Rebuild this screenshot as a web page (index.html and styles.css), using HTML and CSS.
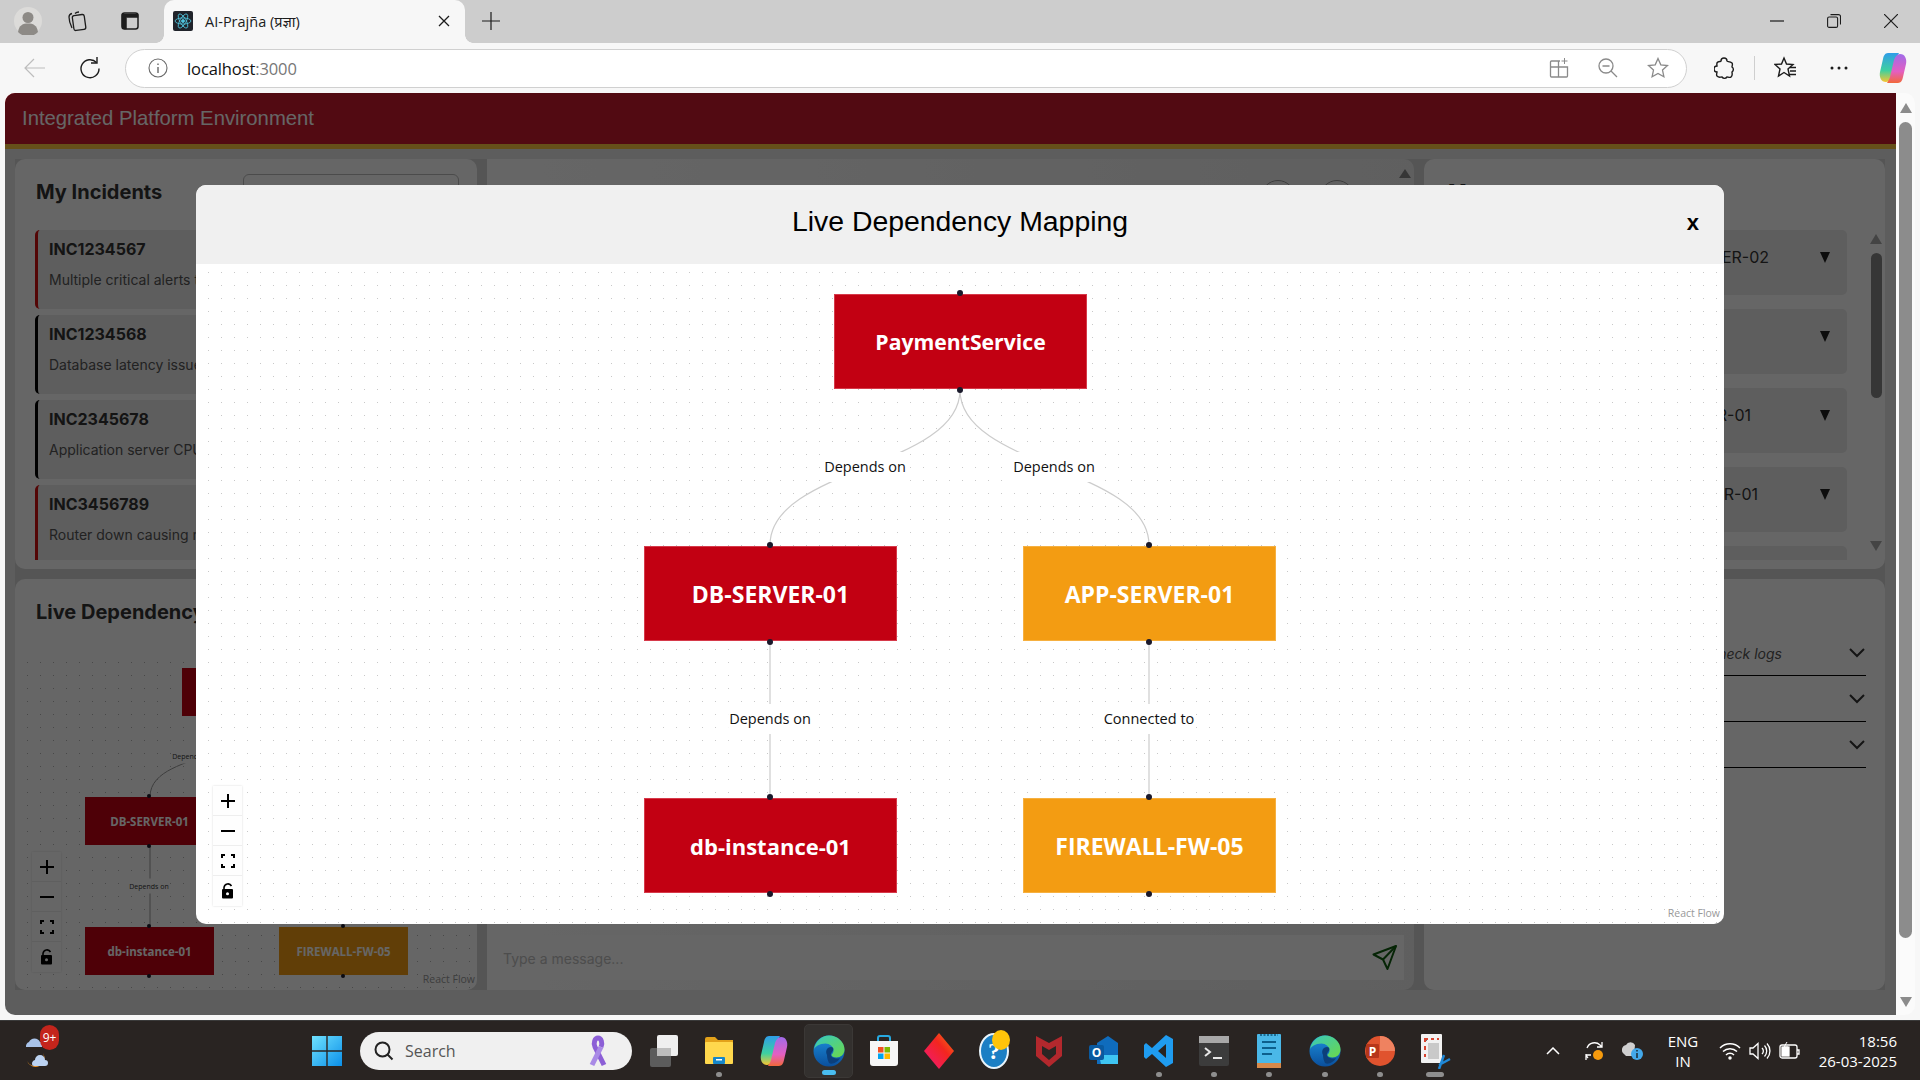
FILE: index.html
```html
<!DOCTYPE html>
<html lang="en">
<head>
<meta charset="utf-8">
<title>AI-Prajña</title>
<link rel="stylesheet" href="styles.css">
</head>
<body>
<div class="tabstrip">
  <span class="ts-profile"><svg viewBox="0 0 28 28" width="28" height="28"><circle cx="14" cy="14" r="14" fill="#dcdbd9"/><circle cx="14" cy="10.5" r="5.5" fill="#8d8a86"/><path d="M4 25c1-7 5-8.5 10-8.5s9 1.500 10 8.500a14 14 0 0 1-20 0z" fill="#8d8a86"/></svg></span>
  <span class="ts-coll"><svg viewBox="0 0 24 24" width="24" height="24" fill="none" stroke="#1c1c1c" stroke-width="1.300"><rect x="8" y="6" width="12" height="15" rx="2" transform="rotate(-8 14 13)"/><path d="M7 19C5 15 4 11 4 8c0-2 1-3 3-3.500M10 4.500C11 3.500 12 3 14 3"/></svg></span>
  <span class="ts-tabs"><svg viewBox="0 0 20 20" width="20" height="20" fill="none" stroke="#1c1c1c" stroke-width="1.500"><rect x="2" y="2" width="16" height="16" rx="2.500"/><path d="M2 3h16v3.500H6.500V18H5a3 3 0 0 1-3-3z" fill="#1c1c1c" stroke-width=".5"/></svg></span>
  <div class="tab">
    <span class="favicon"><svg viewBox="-12 -12 24 24" width="20" height="20" fill="none" stroke="#4fc3dc" stroke-width="1"><ellipse rx="9.500" ry="3.700"/><ellipse rx="9.500" ry="3.700" transform="rotate(60)"/><ellipse rx="9.500" ry="3.700" transform="rotate(120)"/><circle r="1.800" fill="#4fc3dc"/></svg></span>
    <span class="tab-title">AI-Prajña (प्रज्ञा)</span>
    <svg class="tab-x" viewBox="0 0 12 12" width="12" height="12" stroke="#1c1c1c" stroke-width="1.300"><path d="M1 1l10 10M11 1L1 11"/></svg>
  </div>
  <span class="ts-new"><svg viewBox="0 0 18 18" width="18" height="18" stroke="#1c1c1c" stroke-width="1.200"><path d="M9 0v18M0 9h18"/></svg></span>
  <div class="winctl">
    <span class="winbtn"><svg viewBox="0 0 14 14" width="14" height="14" stroke="#1c1c1c" stroke-width="1.200"><path d="M0 7h14"/></svg></span>
    <span class="winbtn"><svg viewBox="0 0 14 14" width="14" height="14" fill="none" stroke="#1c1c1c" stroke-width="1.100"><rect x=".6" y="3" width="10" height="10.400" rx="1.500"/><path d="M3.500 .6h8a2 2 0 0 1 2 2v8"/></svg></span>
    <span class="winbtn"><svg viewBox="0 0 14 14" width="14" height="14" stroke="#1c1c1c" stroke-width="1.200"><path d="M0 0l14 14M14 0L0 14"/></svg></span>
  </div>
</div>

<div class="toolbar">
  <span class="tb-back"><svg viewBox="0 0 22 20" width="22" height="20" fill="none" stroke="#bdbdbd" stroke-width="1.200"><path d="M21 10H1M10 1l-9 9 9 9"/></svg></span>
  <span class="tb-reload"><svg viewBox="0 0 22 24" width="22" height="24" fill="none" stroke="#1c1c1c" stroke-width="1.400"><path d="M17.500 6.500A9 9 0 1 0 20 12.500"/><path d="M18 1v6h-6"/></svg></span>
  <div class="address">
    <span class="addr-info"><svg viewBox="0 0 20 20" width="20" height="20" fill="none" stroke="#6a6a6a" stroke-width="1.100"><circle cx="10" cy="10" r="9"/><path d="M10 9v6M10 5.500v1.500" stroke-width="1.400"/></svg></span>
    <span class="addr-text">localhost<span class="addr-port">:3000</span></span>
    <span class="addr-icons">
      <svg viewBox="0 0 20 20" width="20" height="20" fill="none" stroke="#8a8a8a" stroke-width="1.300"><path d="M11 3H2.500a1 1 0 0 0-1 1v14a1 1 0 0 0 1 1h15a1 1 0 0 0 1-1V9H1.500M9.500 3v16"/><path d="M15.500 0v6M12.500 3h6" stroke-width="1"/></svg>
      <svg viewBox="0 0 20 20" width="20" height="20" fill="none" stroke="#8a8a8a" stroke-width="1.300"><circle cx="8" cy="8" r="7"/><path d="M4.500 8h7M13 13l6 6"/></svg>
      <svg viewBox="0 0 22 22" width="22" height="22" fill="none" stroke="#8a8a8a" stroke-width="1.300"><path d="M11 1.500l2.800 6.300 6.700.7-5 4.600 1.400 6.700L11 16.400l-5.900 3.400 1.400-6.700-5-4.600 6.700-.7z"/></svg>
    </span>
  </div>
  <span class="tb-ext"><svg viewBox="0 0 20 24" width="20" height="24" fill="none" stroke="#1c1c1c" stroke-width="1.400"><path d="M7 5a3 3 0 0 1 6 0c0 1 3 0 5 2 1 1 0 3 0 4a3 3 0 0 1 0 5c0 2 1 3-1 5-1 1-3 0-4 0a3 3 0 0 1-5 0c-2 0-3 1-5-1-1-1 0-3 0-4a3 3 0 0 1 0-6c0-2-1-3 1-4 1-1 3 0 3-1z"/></svg></span>
  <span class="tb-sep"></span>
  <span class="tb-fav"><svg viewBox="0 0 24 24" width="24" height="24" fill="none" stroke="#1c1c1c" stroke-width="1.400"><path d="M10 2l2.500 6 6.500.5-5 4.500 1.500 7-5.500-3.500-5.500 3.500 1.500-7-5-4.500 6.500-.5z"/><path d="M16 11.500h6M16 15h6M15 18.500h7"/></svg></span>
  <span class="tb-dots"><svg viewBox="0 0 18 4" width="18" height="4" fill="#1c1c1c"><circle cx="2" cy="2" r="1.500"/><circle cx="9" cy="2" r="1.500"/><circle cx="16" cy="2" r="1.500"/></svg></span>
  <span class="tb-copilot"><svg viewBox="0 0 28 32" width="28" height="32"><use href="#copilot-art"/></svg></span>
</div>

<div class="viewport">
  <div class="app">
    <header class="app-header">Integrated Platform Environment</header>
    <main class="board">
      <section class="panel incidents">
        <div class="panel-head head-search">
          <h2 class="panel-title">My Incidents</h2>
          <div class="search-box"></div>
        </div>
        <div class="card-list">
          <article class="inc-card inc-red"><h3 class="inc-id">INC1234567</h3><p class="inc-text">Multiple critical alerts triggered on the service</p></article>
          <article class="inc-card inc-black"><h3 class="inc-id">INC1234568</h3><p class="inc-text">Database latency issue on primary</p></article>
          <article class="inc-card inc-black"><h3 class="inc-id">INC2345678</h3><p class="inc-text">Application server CPU usage high</p></article>
          <article class="inc-card inc-red"><h3 class="inc-id">INC3456789</h3><p class="inc-text">Router down causing network outage</p></article>
        </div>
      </section>

      <section class="panel chat">
        <div class="chat-top">
          <div class="chat-circles"><span class="circle"></span><span class="circle"></span></div>
          <span class="mini-arrow"></span>
        </div>
        <div class="chat-input">
          <span class="chat-placeholder">Type a message...</span>
          <svg class="send" viewBox="0 0 25 25" width="25" height="25" fill="none" stroke="#0f5c0f" stroke-width="2" stroke-linejoin="round"><path d="M24 1L1.500 9.500 11 14.500 15.500 24z"/><path d="M24 1L11 14.500"/></svg>
        </div>
      </section>

      <section class="panel devices">
        <div class="panel-head head-devices"><h2 class="panel-title">Messages</h2></div>
        <div class="dev-body">
          <div class="dev-list">
            <div class="dev-card"><span class="dev-name dn-a">DB-SERVER-02</span><span class="tri"></span></div>
            <div class="dev-card"><span class="dev-name dn-b">CORE</span><span class="tri"></span></div>
            <div class="dev-card"><span class="dev-name dn-c">APP-SERVER-01</span><span class="tri"></span></div>
            <div class="dev-card"><span class="dev-name dn-d">ROUTER-01</span><span class="tri"></span></div>
            <div class="dev-card"></div>
          </div>
          <div class="dev-scroll">
            <span class="sb-up"></span>
            <span class="sb-thumb"></span>
            <span class="sb-down"></span>
          </div>
        </div>
      </section>

      <section class="panel graph-panel">
        <div class="panel-head"><h2 class="panel-title">Live Dependency Mapping</h2></div>
        <div class="mini-flow">
          <svg class="flow-edges" width="448" height="411" fill="none" stroke="#999" stroke-width="1"><path d="M135 218C135 190 175 185 190 175"/><path d="M135 267V348"/></svg>
          <div class="mnode mn-top"></div>
          <span class="mlabel ml-a">Depends on</span>
          <span class="mlabel ml-b">Depends on</span>
          <div class="mnode mn-db">DB-SERVER-01<i class="mh mh-t"></i><i class="mh mh-b"></i></div>
          <div class="mnode mn-inst">db-instance-01<i class="mh mh-t"></i><i class="mh mh-b"></i></div>
          <div class="mnode mn-fw">FIREWALL-FW-05<i class="mh mh-t"></i><i class="mh mh-b"></i></div>
          <div class="controls mini-controls">
            <button class="ctl" type="button"><svg viewBox="0 0 14 14" width="14" height="14" stroke="#000" stroke-width="2"><path d="M7 0v14M0 7h14"/></svg></button>
            <button class="ctl" type="button"><svg viewBox="0 0 14 14" width="14" height="14" stroke="#000" stroke-width="2"><path d="M0 7h14"/></svg></button>
            <button class="ctl" type="button"><svg viewBox="0 0 14 14" width="14" height="14" fill="none" stroke="#000" stroke-width="2"><path d="M1 4V1h3M10 1h3v3M13 10v3h-3M4 13H1v-3"/></svg></button>
            <button class="ctl" type="button"><svg viewBox="0 0 12 16" width="12" height="16" fill="#000"><path d="M2 6V4.500A4 4 0 0 1 9.500 3" fill="none" stroke="#000" stroke-width="1.600"/><rect y="6" width="11" height="9.500" rx="1"/><circle cx="5.500" cy="10.700" r="1.500" fill="#fff"/></svg></button>
          </div>
          <span class="rf-credit mini-credit">React Flow</span>
        </div>
      </section>

      <section class="panel actions">
        <div class="act-row"><span class="act-text">Restart the service and check logs</span><svg class="chev" viewBox="0 0 16 10" width="16" height="10" fill="none" stroke="#333" stroke-width="2"><path d="M1 1l7 7 7-7"/></svg></div>
        <div class="act-row"><svg class="chev" viewBox="0 0 16 10" width="16" height="10" fill="none" stroke="#333" stroke-width="2"><path d="M1 1l7 7 7-7"/></svg></div>
        <div class="act-row"><svg class="chev" viewBox="0 0 16 10" width="16" height="10" fill="none" stroke="#333" stroke-width="2"><path d="M1 1l7 7 7-7"/></svg></div>
      </section>
    </main>

    <div class="overlay">
      <div class="modal">
        <div class="modal-head">
          <h1 class="modal-title">Live Dependency Mapping</h1>
          <span class="modal-close">x</span>
        </div>
        <div class="flow">
          <svg class="flow-edges" width="1528" height="660" fill="none" stroke="#ccc" stroke-width="1.200">
            <path d="M764 126C764 203.500 574 203.500 574 281"/>
            <path d="M764 126C764 203.500 953 203.500 953 281"/>
            <path d="M574 376V533"/>
            <path d="M953 376V533"/>
          </svg>
          <div class="node n-red n-pay">PaymentService<i class="h h-t"></i><i class="h h-b"></i></div>
          <div class="node n-red n-db">DB-SERVER-01<i class="h h-t"></i><i class="h h-b"></i></div>
          <div class="node n-amber n-app">APP-SERVER-01<i class="h h-t"></i><i class="h h-b"></i></div>
          <div class="node n-red n-inst">db-instance-01<i class="h h-t"></i><i class="h h-b"></i></div>
          <div class="node n-amber n-fw">FIREWALL-FW-05<i class="h h-t"></i><i class="h h-b"></i></div>
          <span class="elabel el-a">Depends on</span>
          <span class="elabel el-b">Depends on</span>
          <span class="elabel el-c">Depends on</span>
          <span class="elabel el-d">Connected to</span>
          <div class="controls modal-controls">
            <button class="ctl" type="button"><svg viewBox="0 0 14 14" width="14" height="14" stroke="#000" stroke-width="2"><path d="M7 0v14M0 7h14"/></svg></button>
            <button class="ctl" type="button"><svg viewBox="0 0 14 14" width="14" height="14" stroke="#000" stroke-width="2"><path d="M0 7h14"/></svg></button>
            <button class="ctl" type="button"><svg viewBox="0 0 14 14" width="14" height="14" fill="none" stroke="#000" stroke-width="2"><path d="M1 4V1h3M10 1h3v3M13 10v3h-3M4 13H1v-3"/></svg></button>
            <button class="ctl" type="button"><svg viewBox="0 0 12 16" width="12" height="16" fill="#000"><path d="M2 6V4.500A4 4 0 0 1 9.500 3" fill="none" stroke="#000" stroke-width="1.600"/><rect y="6" width="11" height="9.500" rx="1"/><circle cx="5.500" cy="10.700" r="1.500" fill="#fff"/></svg></button>
          </div>
          <span class="rf-credit modal-credit">React Flow</span>
        </div>
      </div>
    </div>
  </div>
  <div class="page-scroll">
    <span class="ps-up"></span>
    <span class="ps-thumb"></span>
    <span class="ps-down"></span>
  </div>
</div>

<div class="taskbar">
  <span class="tk-weather">
    <svg viewBox="0 0 36 40" width="36" height="40"><path d="M4 16a5 5 0 0 1 3-5 6 6 0 0 1 11 0h2v5z" fill="#a9c4ea"/><path d="M21 22a9 9 0 1 1-16 8 8 8 0 0 0 16-8z" fill="#ef9322"/><path d="M10 33a4 4 0 0 1 3-4 5 5 0 0 1 10 0 3 3 0 0 1 0 6H12a2 2 0 0 1-2-2z" fill="#bcd3f2"/></svg>
    <span class="tk-badge">9+</span>
  </span>
  <span class="tk-start"><svg viewBox="0 0 30 30" width="30" height="30"><defs><linearGradient id="win" x1="0" y1="0" x2="1" y2="1"><stop offset="0" stop-color="#6fe2ff"/><stop offset="1" stop-color="#0b8fe8"/></linearGradient></defs><path d="M0 0h14.300v14.300H0zM15.700 0H30v14.300H15.700zM0 15.700h14.300V30H0zM15.700 15.700H30V30H15.700z" fill="url(#win)"/></svg></span>
  <div class="tk-search">
    <svg viewBox="0 0 20 20" width="20" height="20" fill="none" stroke="#222" stroke-width="2"><circle cx="8.500" cy="8.500" r="7"/><path d="M13.500 13.500l5 5"/></svg>
    <span class="tk-search-text">Search</span>
    <svg class="ribbon" viewBox="0 0 20 32" width="20" height="32" fill="none" stroke-width="5"><path d="M16 30L7 12c-2-4 0-9 3-9s5 5 3 9" stroke="#8c5fd6"/><path d="M4 30l9-18" stroke="#a98ae6"/></svg>
  </div>
  <div class="tk-apps">
    <span class="app-slot"><svg viewBox="0 0 30 34" width="30" height="34"><rect x="8" y="1" width="21" height="21" rx="2" fill="#efefef"/><rect x="1" y="14" width="21" height="19" rx="2" fill="#5c5c5c"/><rect x="8" y="14" width="14" height="8" fill="#bdbdbd"/></svg></span>
    <span class="app-slot run"><svg viewBox="0 0 30 30" width="30" height="30"><path d="M1 3a2 2 0 0 1 2-2h8l3 3h15v23H1z" fill="#e3a21a"/><rect x="1" y="6" width="28" height="22" rx="1" fill="#ffd84d"/><rect x="9" y="21" width="12" height="7" rx="1" fill="#1586c9"/><rect x="12" y="23" width="6" height="1.500" fill="#fff"/></svg></span>
    <span class="app-slot"><svg viewBox="0 0 28 32" width="28" height="32"><use href="#copilot-art"/></svg></span>
    <span class="app-slot active"><svg viewBox="0 0 32 32" width="32" height="32"><use href="#edge-art"/></svg></span>
    <span class="app-slot"><svg viewBox="0 0 30 32" width="30" height="32"><path d="M9 6V3a2 2 0 0 1 2-2h8a2 2 0 0 1 2 2v3" fill="none" stroke="#27a9e0" stroke-width="2"/><path d="M1 6h28v22a3 3 0 0 1-3 3H4a3 3 0 0 1-3-3z" fill="#f6f6f6"/><rect x="9" y="12" width="5.500" height="5.500" fill="#f25022"/><rect x="15.500" y="12" width="5.500" height="5.500" fill="#7fba00"/><rect x="9" y="18.500" width="5.500" height="5.500" fill="#00a4ef"/><rect x="15.500" y="18.500" width="5.500" height="5.500" fill="#ffb900"/></svg></span>
    <span class="app-slot"><svg viewBox="0 0 30 36" width="30" height="36"><defs><linearGradient id="dia" x1="0" y1="1" x2="1" y2="0"><stop offset="0" stop-color="#f0187c"/><stop offset=".6" stop-color="#f3261f"/><stop offset="1" stop-color="#f67a14"/></linearGradient></defs><path d="M15 0l15 18-15 18L0 18z" fill="url(#dia)"/></svg></span>
    <span class="app-slot"><span class="help-ic">?</span><span class="help-dot"></span></span>
    <span class="app-slot"><svg viewBox="0 0 28 34" width="28" height="34"><path d="M1 2l13 7 13-7v20L14 33 1 22z" fill="#b3282d"/><path d="M7 12l7 4 7-4v8l-7 6-7-6z" fill="#2a2523"/></svg></span>
    <span class="app-slot"><svg viewBox="0 0 30 32" width="30" height="32"><path d="M8 8l11-7 10 7v18a3 3 0 0 1-3 3H8z" fill="#0f6cbd"/><path d="M10 20h19v9H12z" fill="#3fc5f2"/><rect x="0" y="10" width="15" height="15" rx="2" fill="#0a5aa0"/><text class="ol-letter" x="7.500" y="21.500">O</text></svg></span>
    <span class="app-slot run"><svg viewBox="0 0 30 34" width="30" height="34"><path d="M22 1l7 4v24l-7 4L8 20l-6 5-2-2V11l2-2 6 5zM22 10l-8 7 8 7z" fill="#1f9cf0" fill-rule="evenodd"/></svg></span>
    <span class="app-slot run"><svg viewBox="0 0 30 32" width="30" height="32"><rect y="1" width="30" height="30" rx="2" fill="#3c3c3c"/><rect y="1" width="30" height="7" fill="#a8a8a8"/><path d="M6 13l5 4-5 4" fill="none" stroke="#e8e8e8" stroke-width="2"/><path d="M14 23h9" stroke="#e8e8e8" stroke-width="2"/></svg></span>
    <span class="app-slot run"><svg viewBox="0 0 24 36" width="24" height="36"><rect y="1" width="24" height="33" rx="1" fill="#4ab8e8"/><rect y="30" width="24" height="5" fill="#d7894a"/><path d="M5 9h14M5 15h14M5 21h10" stroke="#0d5f8c" stroke-width="2"/><path d="M3 2h18" stroke="#1a6c94" stroke-width="2" stroke-dasharray="2 1.500"/></svg></span>
    <span class="app-slot run"><svg viewBox="0 0 32 32" width="32" height="32"><use href="#edge-art"/></svg></span>
    <span class="app-slot run"><svg viewBox="0 0 30 32" width="30" height="32"><circle cx="15" cy="16" r="15" fill="#e0532e"/><path d="M15 16h15a15 15 0 0 0-15-15z" fill="#ef8260"/><rect x="1" y="9" width="13" height="14" rx="1" fill="#b7361a"/><text class="ppt-letter" x="7.500" y="20.500">P</text></svg></span>
    <span class="app-slot run wide"><svg viewBox="0 0 32 36" width="32" height="36"><rect x="2" y="1" width="21" height="29" rx="1" fill="#f2f2f2"/><path d="M6 9V6h3M12 6h3M18 6h2M6 13v4M6 21v3" stroke="#d8432f" stroke-width="2"/><rect x="9" y="10" width="11" height="16" fill="#c9c9c9"/><path d="M20 36l5-14M31 26l-11 6" stroke="#1e88d8" stroke-width="2.500"/></svg></span>
  </div>
  <div class="tray">
    <svg class="tray-up" viewBox="0 0 14 8" width="14" height="8" fill="none" stroke="#fff" stroke-width="1.500"><path d="M1 7l6-6 6 6"/></svg>
    <span class="tray-sync"><svg viewBox="0 0 22 24" width="22" height="24" fill="none" stroke="#fff" stroke-width="1.300"><path d="M4 9a8 8 0 0 1 13-3l2 2M19 3v5h-5M3 15a8 8 0 0 0 2 4M3 21v-5h5"/><circle cx="15" cy="16" r="5" fill="#f59a0d" stroke="none"/></svg></span>
    <span class="tray-cloud"><svg viewBox="0 0 22 20" width="22" height="20"><path d="M2 13a5 5 0 0 1 2-9 5 5 0 0 1 9 0l-1 11H4z" fill="#cfcfcf"/><circle cx="15" cy="13" r="6" fill="#43a8ea"/><path d="M15 12v5M15 9v1.500" stroke="#1c2a33" stroke-width="1.500"/></svg></span>
    <span class="tray-lang"><span>ENG</span><span>IN</span></span>
    <span class="tray-ic"><svg viewBox="0 0 22 18" width="22" height="18" fill="none" stroke="#fff" stroke-width="1.500"><path d="M1 6a14 14 0 0 1 20 0M4 9.500a10 10 0 0 1 14 0M7 13a5.500 5.500 0 0 1 8 0"/><circle cx="11" cy="16" r="1" fill="#fff"/></svg></span>
    <span class="tray-ic"><svg viewBox="0 0 22 20" width="22" height="20" fill="none" stroke="#fff" stroke-width="1.300"><path d="M1 7h3l5-4.500v15L4 13H1zM13 7a4 4 0 0 1 0 6M15.500 4.500a8 8 0 0 1 0 11M18 2.500a11 11 0 0 1 0 15"/></svg></span>
    <span class="tray-ic"><svg viewBox="0 0 22 18" width="22" height="18" fill="none" stroke="#fff" stroke-width="1.300"><rect x="1" y="3" width="17" height="13" rx="2"/><rect x="3" y="5" width="7" height="9" fill="#fff"/><path d="M18 8h2v4h-2"/><path d="M8 0L5 5h4l-2 5" stroke-width="1"/></svg></span>
    <span class="tray-time"><span>18:56</span><span>26-03-2025</span></span>
  </div>
</div>

<svg class="defs" width="0" height="0"><defs>
  <linearGradient id="edg1" x1="0" y1="0" x2="1" y2="1"><stop offset="0" stop-color="#37c8c0"/><stop offset="1" stop-color="#6bd84a"/></linearGradient>
  <linearGradient id="edg2" x1="0" y1="0" x2="0" y2="1"><stop offset="0" stop-color="#1d8fdc"/><stop offset="1" stop-color="#0a4f9c"/></linearGradient>
  <linearGradient id="cpa" x1="0" y1="0" x2="0" y2="1"><stop offset="0" stop-color="#2f9de8"/><stop offset=".6" stop-color="#3ed0a0"/><stop offset="1" stop-color="#f7c531"/></linearGradient>
  <linearGradient id="cpb" x1="0" y1="0" x2="0" y2="1"><stop offset="0" stop-color="#f2683a"/><stop offset=".4" stop-color="#e35fc2"/><stop offset="1" stop-color="#a06be8"/></linearGradient>
  <g id="edge-art"><circle cx="16" cy="16" r="15.500" fill="url(#edg2)"/><path d="M1 15C2 6 9 .5 16 .5c9 0 15.500 7 15.500 14 0 5-4 8-8 8-3 0-5-1-5-2.500 0-1 2-1.500 2-4.500 0-4-4-7-8-7-6 0-11 3-11.500 6.500z" fill="url(#edg1)"/><path d="M14 20c-2-4 0-8 4-8 3 0 3 3 1 5-1 1-2 3 0 5 2 1.500 5 2 8 1-2 4-8 7-11 5-1-2-2-5-2-8z" fill="#0c3f7a"/></g>
  <g id="copilot-art"><path d="M9 1h11c-1 2-2 3-3 6l-4 17c-1 3-3 6-6 6-5 0-7-5-6-10l3-13c.5-3 2-6 5-6z" fill="url(#cpa)"/><path d="M9 1h11c-1 2-2 3-3 6l-4 17c-1 3-3 6-6 6-5 0-7-5-6-10l3-13c.5-3 2-6 5-6z" fill="url(#cpb)" transform="rotate(180 14 16)"/></g>
</defs></svg>
</body>
</html>
```
FILE: styles.css
```css
* { box-sizing: border-box; }
html, body { margin: 0; height: 100%; }
body {
  width: 1920px; height: 1080px; overflow: hidden;
  background: #f7f7f7; color: #1c1c1c;
  font-family: "Open Sans", "Noto Sans", "DejaVu Sans", sans-serif;
  display: flex; flex-direction: column;
}
svg { display: block; flex: none; }
.defs { position: absolute; }

/* tab strip */
.tabstrip { height: 43px; flex: none; background: #cdcdcd; display: flex; align-items: center; padding-bottom: 1px; }
.ts-profile { margin-left: 14px; }
.ts-coll { margin-left: 23px; }
.ts-tabs { margin-left: 31px; }
.tab {
  position: relative; align-self: flex-start;
  margin-left: 24px; width: 301px; height: 43px; background: #f7f7f7;
  border-radius: 10px 10px 0 0; display: flex; align-items: center; padding: 0 15px 1px 9px;
}
.tab::before, .tab::after { content: ""; position: absolute; bottom: 0; width: 8px; height: 8px; }
.tab::before { left: -8px; background: radial-gradient(circle at 0 0, transparent 7.500px, #f7f7f7 8px); }
.tab::after { right: -8px; background: radial-gradient(circle at 100% 0, transparent 7.500px, #f7f7f7 8px); }
.favicon { width: 20px; height: 20px; background: #20232a; border-radius: 2px; flex: none; }
.tab-title { margin-left: 12px; font-size: 14.500px; font-family: "Open Sans", "Noto Sans", "DejaVu Sans", sans-serif; white-space: nowrap; }
.tab-x { margin-left: auto; }
.ts-new { margin-left: 17px; }
.winctl { margin-left: auto; display: flex; padding-right: 1px; }
.winbtn { width: 57px; display: flex; justify-content: center; }

/* toolbar */
.toolbar { height: 50px; flex: none; display: flex; align-items: center; background: #f7f7f7; }
.toolbar > span { display: flex; justify-content: center; align-items: center; }
.tb-back { width: 40px; margin-left: 15px; }
.tb-reload { width: 40px; margin-left: 15px; }
.address {
  margin-left: 15px; width: 1562px; height: 39px; background: #fff; border: 1px solid #d0d0d0;
  border-radius: 20px; display: flex; align-items: center; padding: 0 17px 0 22px;
}
.addr-text { margin-left: 19px; font-size: 16.500px; letter-spacing: -.1px; color: #111; }
.addr-port { color: #777; }
.addr-icons { margin-left: auto; display: flex; gap: 29px; align-items: center; }
.tb-ext { width: 40px; margin-left: 17px; }
.tb-sep { width: 1px; height: 24px; background: #cfcfcf; margin-left: 10px; }
.tb-fav { width: 40px; margin-left: 11px; }
.tb-dots { width: 40px; margin-left: 13px; }
.tb-copilot { width: 40px; margin-left: 14px; }

/* viewport */
.viewport { height: 922px; flex: none; margin: 0 5px; display: flex; }
.app { position: relative; width: 1891px; border-radius: 10px 0 0 10px; overflow: hidden; background: #e8e8e8; display: flex; flex-direction: column; }
.app-header {
  height: 56px; flex: none; background: #cd192d; border-bottom: 5px solid #ffc841; color: #fff;
  font: 20.300px "Liberation Sans", Arial, sans-serif; display: flex; align-items: center; padding-left: 17px;
}
.board {
  margin: 10px 11px 25px 10px; flex: 1; background: #d4d4d4;
  display: grid; gap: 10px; grid-template-columns: 462px 927px 461px; grid-template-rows: 410px 411px;
  font-family: Inter, "Noto Sans", sans-serif;
}
.panel { background: #fff; border-radius: 10px; overflow: hidden; position: relative; }
.panel-head { height: 71px; display: flex; align-items: flex-start; justify-content: space-between; padding: 15px 18px 0 21px; }
.head-devices { padding-left: 24px; }
.panel-title { margin: 0; font-size: 20px; font-weight: 700; line-height: 36px; color: #333; white-space: nowrap; }
.search-box { width: 216px; height: 36px; border: 1px solid #bbb; border-radius: 6px; background: #fff; }

.incidents { grid-column: 1; grid-row: 1; }
.card-list { height: 330px; margin: 0 20px; overflow: hidden; display: flex; flex-direction: column; gap: 6px; }
.inc-card { flex: none; height: 79px; background: #ebebeb; border-radius: 5px; padding: 9px 10px 0 11px; border-left: 3px solid; }
.inc-red { border-left-color: #d30f0f; }
.inc-black { border-left-color: #000; }
.inc-id { margin: 0; font-size: 16px; font-weight: 700; line-height: 20px; color: #333; }
.inc-text { margin: 11px 0 0; font-size: 14px; line-height: 20px; color: #555; white-space: nowrap; }

.chat { grid-column: 2; grid-row: 1 / span 2; display: flex; flex-direction: column; padding: 0 10px 10px; background: linear-gradient(90deg, #fff, #eee); border-radius: 0 10px 10px 0; }
.chat-top { flex: 1; display: flex; justify-content: flex-end; }
.chat-circles { display: flex; gap: 25px; padding: 21px 45px 0 0; }
.circle { width: 34px; height: 34px; border-radius: 50%; border: 1px solid #999; }
.mini-arrow { width: 0; height: 0; margin: 10px -7px 0 0; border: solid transparent; border-width: 0 6px 9px; border-bottom-color: #888; }
.chat-input { height: 45px; flex: none; background: #fff; display: flex; align-items: center; justify-content: space-between; padding: 0 7px 0 6px; }
.chat-placeholder { font-size: 14px; color: #c0c0c0; padding-top: 2px; }

.devices { grid-column: 3; grid-row: 1; }
.dev-body { display: flex; height: 330px; padding-left: 20px; }
.dev-list { width: 403px; overflow: hidden; display: flex; flex-direction: column; gap: 14px; }
.dev-card { flex: none; height: 65px; background: #ebebeb; border-radius: 5px; display: flex; align-items: flex-start; justify-content: flex-end; padding: 17px 17px 0 0; }
.dev-name { font-size: 16px; line-height: 20px; color: #333; white-space: nowrap; }
.dn-a { margin-right: 51px; }
.dn-b { margin-right: 105px; }
.dn-c { margin-right: 69px; }
.dn-d { margin-right: 62px; }
.tri { width: 0; height: 0; border: solid transparent; border-width: 11px 5.500px 0; border-top-color: #222; margin-top: 5px; }
.dev-scroll { width: 18px; margin-left: 20px; display: flex; flex-direction: column; align-items: center; padding-top: 4px; }
.sb-up { width: 0; height: 0; border: solid transparent; border-width: 0 6.500px 10px; border-bottom-color: #aaa; }
.sb-thumb { width: 11px; height: 145px; background: #888; border-radius: 6px; margin-top: 9px; }
.sb-down { width: 0; height: 0; border: solid transparent; border-width: 10px 6.500px 0; border-top-color: #aaa; margin-top: 143px; }

.graph-panel { grid-column: 1; grid-row: 2; }
.mini-flow {
  position: absolute; inset: 71px 0 0 0;
  background-image: radial-gradient(#b4b4b4 .9px, transparent .9px); background-size: 13px 13px; background-position: 6px 6px;
}
.flow-edges { position: absolute; left: 0; top: 0; }
.graph-panel .flow-edges { top: -71px; }
.mnode {
  position: absolute; width: 129px; height: 48px; background: #c40012; color: #fff;
  font-family: "Open Sans", "Noto Sans", sans-serif; font-weight: 700; font-size: 11.500px;
  display: flex; align-items: center; justify-content: center; white-space: nowrap;
}
.mn-top { left: 167px; top: 18px; height: 48px; }
.mn-db { left: 70px; top: 147px; }
.mn-inst { left: 70px; top: 277px; }
.mn-fw { left: 264px; top: 277px; background: #f39c12; }
.mh { position: absolute; left: 62px; width: 4px; height: 4px; border-radius: 50%; background: #1a192b; }
.mh-t { top: -3px; }
.mh-b { bottom: -3px; }
.mlabel { position: absolute; font-family: "Open Sans", "Noto Sans", sans-serif; font-size: 7px; color: #333; transform: translate(-50%, -50%); white-space: nowrap; background: #fff; padding: 3px 0; }
.ml-a { left: 177px; top: 106px; }
.ml-b { left: 134px; top: 236px; }
.controls { position: absolute; width: 29px; display: flex; flex-direction: column; background: #fff; box-shadow: 0 0 2px rgba(0,0,0,.15); }
.ctl { height: 30px; width: 29px; padding: 0; border: 0; border-bottom: 1px solid #eee; background: #fefefe; display: flex; align-items: center; justify-content: center; }
.ctl:last-child { border-bottom: 0; }
.mini-controls { left: 17px; top: 202px; }
.rf-credit { position: absolute; font-family: "Open Sans", "Noto Sans", sans-serif; font-size: 10.500px; line-height: 14px; color: #999; white-space: nowrap; }
.mini-credit { right: 2px; bottom: 4px; }

.actions { grid-column: 3; grid-row: 2; padding: 51px 19px 0 20px; }
.act-row { height: 46px; border-bottom: 1px solid #000; display: flex; align-items: center; justify-content: flex-end; position: relative; padding: 1px 1px 0 0; }
.act-text { font-style: italic; font-size: 14px; color: #555; margin-right: 67px; white-space: nowrap; }

/* modal */
.overlay { position: absolute; inset: 0; background: rgba(0,0,0,.6); }
.modal { position: absolute; left: 191px; top: 92px; width: 1528px; height: 739px; background: #fff; border-radius: 10px; overflow: hidden; display: flex; flex-direction: column; }
.modal-head { height: 79px; flex: none; background: #f0f0f0; display: flex; align-items: flex-start; justify-content: center; position: relative; }
.modal-title { margin: 19px 0 0; font: 400 28.400px/34px "Liberation Sans", Arial, sans-serif; color: #000; }
.modal-close { position: absolute; right: 25px; top: 25px; font: 700 22px/26px "Liberation Sans", Arial, sans-serif; color: #000; }
.flow {
  flex: 1; position: relative;
  background-image: radial-gradient(#c8c8c8 .9px, transparent .9px); background-size: 13px 13px; background-position: 6px 2px;
}
.node {
  position: absolute; width: 253px; height: 95px; color: #fff; font-family: "Open Sans", "Noto Sans", sans-serif;
  font-weight: 700; font-size: 23px; display: flex; align-items: center; justify-content: center; white-space: nowrap; border: 1px solid;
}
.n-red { background: #c20012; border-color: #d63a4a; }
.n-amber { background: #f39c12; border-color: #f6b040; }
.n-pay { left: 638px; top: 30px; font-size: 21.200px; }
.n-db { left: 448px; top: 282px; }
.n-app { left: 827px; top: 282px; }
.n-inst { left: 448px; top: 534px; font-size: 22px; }
.n-fw { left: 827px; top: 534px; }
.h { position: absolute; left: 122px; width: 6px; height: 6px; border-radius: 50%; background: #1a192b; }
.h-t { top: -5px; }
.h-b { bottom: -5px; }
.elabel { position: absolute; font-size: 14.500px; line-height: 30px; color: #111; background: #fff; transform: translate(-50%, -50%); white-space: nowrap; padding: 0 1px; }
.el-a { left: 669px; top: 203px; }
.el-b { left: 858px; top: 203px; }
.el-c { left: 574px; top: 455px; }
.el-d { left: 953px; top: 455px; }
.modal-controls { left: 17px; top: 522px; }
.modal-credit { right: 4px; bottom: 4px; color: #999; }

/* page scrollbar */
.page-scroll { width: 19px; background: #fbfbfb; border-radius: 0 10px 10px 0; display: flex; flex-direction: column; align-items: center; padding-top: 10px; }
.ps-up { width: 0; height: 0; border: solid transparent; border-width: 0 6px 10px; border-bottom-color: #8c8c8c; }
.ps-thumb { width: 13px; height: 816px; margin-top: 9px; background: #8c8c8c; border-radius: 7px; }
.ps-down { width: 0; height: 0; border: solid transparent; border-width: 10px 6px 0; border-top-color: #8c8c8c; margin-top: 59px; }

/* taskbar */
.taskbar { margin-top: 5px; height: 60px; flex: none; background: #292422; border-top: 1px solid #3a3a3a; display: flex; align-items: center; color: #fff; }
.tk-weather { width: 80px; display: flex; justify-content: center; position: relative; }
.tk-badge { position: absolute; left: 40px; top: -6px; width: 19px; height: 25px; border-radius: 10px; background: #c4251c; font-size: 12px; line-height: 25px; text-align: center; color: #fff; }
.tk-start { margin-left: 232px; }
.tk-search { margin-left: 18px; width: 272px; height: 38px; border-radius: 19px; background: #f0f0f0; display: flex; align-items: center; padding: 0 24px 0 14px; color: #555; }
.tk-search-text { margin-left: 11px; font-size: 16px; }
.ribbon { margin-left: auto; }
.tk-apps { display: flex; margin-left: 4px; }
.app-slot { position: relative; width: 55.100px; height: 60px; display: flex; align-items: center; justify-content: center; }
.app-slot.run::after { content: ""; position: absolute; left: 50%; bottom: 4px; width: 6px; height: 5px; margin-left: -3px; border-radius: 3px; background: #8e8e8e; }
.app-slot.wide::after { width: 18px; margin-left: -9px; }
.app-slot.active { background: #33302e; border: 1px solid #3b3836; border-radius: 5px; height: 54px; width: 49px; margin: 3px 3px; }
.app-slot.active::after { content: ""; position: absolute; left: 50%; bottom: 2px; width: 14px; height: 5px; margin-left: -7px; border-radius: 3px; background: #49bdf0; }
.help-ic { width: 30px; height: 36px; border-radius: 50%; background: #1b7fc4; border: 2px solid #e8f4fb; color: #fff; font: 700 24px/32px "Liberation Serif", serif; text-align: center; }
.help-dot { position: absolute; left: 26px; top: 9px; width: 18px; height: 20px; border-radius: 50%; background: #ffc40a; }
.ol-letter { font: 700 12px "Open Sans", sans-serif; fill: #fff; text-anchor: middle; }
.ppt-letter { font: 700 12px "Open Sans", sans-serif; fill: #fff; text-anchor: middle; }
.tray { margin-left: auto; display: flex; align-items: center; padding-right: 23px; font-size: 15px; }
.tray-sync { margin-left: 23px; }
.tray-cloud { margin-left: 17px; }
.tray-lang { margin-left: 14px; width: 50px; display: flex; flex-direction: column; align-items: center; line-height: 20px; }
.tray-ic { margin-left: 8px; width: 22px; }
.tray-lang + .tray-ic { margin-left: 11px; }
.tray-time { margin-left: 12px; display: flex; flex-direction: column; align-items: flex-end; line-height: 20px; width: 84px; }
```
